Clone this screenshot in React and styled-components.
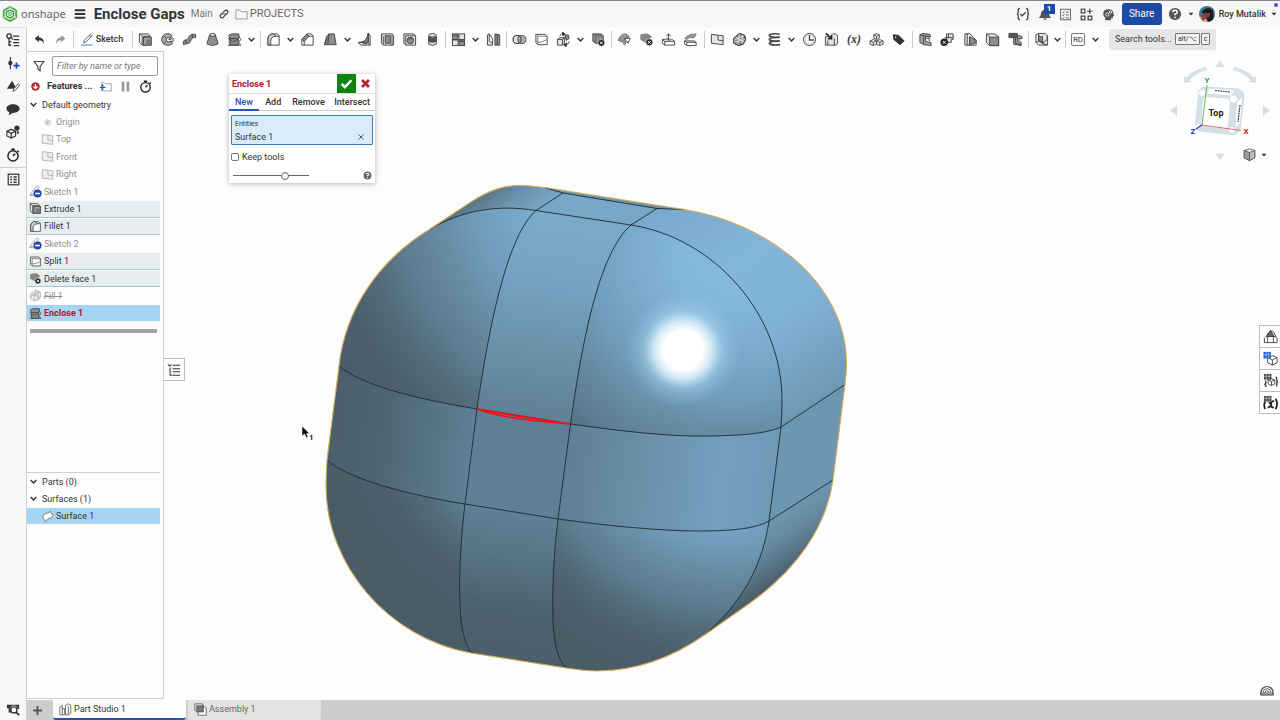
import React from 'react';
import styled, { createGlobalStyle, css } from 'styled-components';

const GlobalStyle = createGlobalStyle`
    * {
        box-sizing: border-box;
    }
    body {
        margin: 0;
        background: #fdfdfd;
        color: #333;
        font-family: Roboto, "Liberation Sans", sans-serif;
        font-size: 9px;
        line-height: 12px;
    }
    button, input {
        font: inherit;
        color: inherit;
    }
    button {
        padding: 0;
        border: 0;
        background: none;
        cursor: pointer;
    }
`;

/* ---------- icons, all on a 16 x 16 grid ---------- */

const dark = '#444';
const mid = '#8c8c8c';
const pale = '#e4e4e4';

const icons = {
    undo: <path d="M1 6.500 L7 1.500 V5 C12.500 5 15 8.500 14 14.500 C13 10.500 11 9 7 9 V12 Z" fill="#333" stroke="none" />,
    redo: <path d="M15 6.500 L9 1.500 V5 C3.500 5 1 8.500 2 14.500 C3 10.500 5 9 9 9 V12 Z" fill="#999" stroke="none" />,
    pencil: <g><path d="M3 12 L4 9 L11.500 1.500 L13.500 3.500 L6 11 Z M10 3 L12 5" /><path d="M0 14.800 H14" stroke="#2d5db5" /></g>,
    chevron: <path d="M3 5.500 L8 10.500 L13 5.500" strokeWidth="2.600" stroke="#333" />,
    caret: <path d="M3 5.500 H13 L8 11 Z" fill="#333" stroke="none" />,
    extrude: <g><path d="M1.500 2 H11 L12.500 3.500 V5.500 M1.500 2 V11 L4.500 14 H14 V5.500 H6 V14" fill={pale} /><path d="M6 5.500 H14 V14 H6 Z" fill="#a5a5a5" /><path d="M8.500 8 H14 V14 H8.500 Z" fill="#777" stroke="none" /><path d="M1.500 2 L4.500 4.500 V14 M4.500 4.500 H12.500" /></g>,
    revolve: <g><path d="M13 4 Q10 1 7 1.800 Q2 3 1.800 8 Q2 13 7 14.200 Q10.500 14.800 13.500 12 L11 9.800 Q9 11.200 7.500 10.200 Q6 8.500 7 6.800 Q8.500 5 10.500 6.500 Z" fill="#aaa" /><path d="M10 6.500 H14 V10 H11 M9 8 H12 M4 4 L6.500 6.500 M4 12.500 L6.500 10" /></g>,
    sweep: <path d="M1.500 10 C2.500 7.500 5.500 9.500 6.500 7 C7.500 3 11 2 14.500 2.500 V6 C11 5.500 10 7 9 10 C7.500 13.500 4.500 12 1.500 13.500 Z M11 2.700 V6 M4 9 L4.500 12.500" fill={mid} />,
    loft: <g><path d="M5 3 L11 3 L14 12.500 Q8 16 2 12.500 Z" fill={mid} /><ellipse cx="8" cy="3" rx="3" ry="1.500" fill={pale} /></g>,
    enclose: <g><path d="M2 3.500 L5 2 H12.500 L13 5 L11 7 H3 Z" fill={mid} /><path d="M3 7 H12 V14 H3 Z" fill={mid} /><path d="M1 6.500 L6 10.500 L12.500 7.500 M1 14 H15 M12.500 5 L15 8 L12 10.500 L14.500 13.500 M1.500 10 L4 12" /></g>,
    fillet: <g><path d="M2 14 V8 Q2 2 8 2 H12 L14 4 V14 H5 Z" fill="#fff" /><path d="M2 13.500 V8 Q2 2 8 2 L11 4.500 Q5 5 5 10 V14 Z" fill="#c9c9c9" /><path d="M11 4.500 H14" /></g>,
    chamfer: <g><path d="M2 14 V8 L7.500 2 H12 L14 4.500 V14 Z" fill="#fff" /><path d="M2 8 L7.500 2 L9.500 4.500 L4.500 10 Z" fill={mid} /><path d="M4.500 10 V14 M9.500 4.500 H14" /></g>,
    draft: <g><path d="M6.500 2 L12 2 L14 13.500 H1.500 Z" fill={mid} /><path d="M6.500 2 L4 4 L1.500 13.500 M6.500 2 L5 13.500" /></g>,
    rib: <g><path d="M12 1.500 L14 3.500 V14 H4 L1.500 11.500 L6 10.500 Q11 9 12 1.500 Z" fill={pale} /><path d="M12 1.500 V11 L9 13 L5 11 Q11 9 12 1.500 Z" fill={mid} /><path d="M12 1.500 V11 H1.500 M12 11 L14 14" /></g>,
    shell: <g><path d="M1.500 2 H13 L14.500 4 V14 H4 L1.500 12 Z" fill={pale} /><path d="M5.500 4 H11 V12 H5.500 Z" fill={mid} /><path d="M3.500 4 V14 M12.800 3 V14" /></g>,
    hole: <g><path d="M2 2 H12.500 L14.500 4 V14 H4 L2 12 Z" fill={pale} /><circle cx="9" cy="9" r="3.500" fill={mid} /><path d="M4 4 V14 M4 4 H14" /><path d="M7 8 Q9 5.500 11 8" /></g>,
    cylinder: <g><path d="M4 3.500 V13 Q8 15.500 12 13 V3.500" fill={pale} /><ellipse cx="8" cy="3.500" rx="4" ry="1.800" fill={pale} /><path d="M4 5.500 Q8 7.500 12 5.500 V10 Q8 12 4 10 Z" fill="#555" /></g>,
    pattern: <g><rect x="1.500" y="2" width="6" height="6" fill={mid} /><rect x="8.500" y="2" width="6" height="6" fill={pale} /><rect x="1.500" y="8.500" width="6" height="6" fill={pale} /><rect x="8.500" y="8.500" width="6" height="6" fill={mid} /><path d="M3 4 H7.500 M8.500 10 H14" /></g>,
    mirror: <g><path d="M1.500 3 L3.500 2 V10 L7 12 V14 H1.500 Z" fill={pale} /><path d="M14.500 3 L9.500 2 V14 H14.500 Z" fill={mid} /><path d="M3.500 2 L7 7 V12 M12 3 V14" /></g>,
    boolean: <g><circle cx="5.500" cy="8" r="4.300" fill={pale} /><circle cx="10.500" cy="8" r="4.300" fill={mid} fillOpacity=".7" /><circle cx="5.500" cy="8" r="4.300" /></g>,
    split: <g><path d="M2 2.500 H12 L14 4.500 V13.500 H4 L2 11.500 Z" fill="#fff" /><path d="M2 2.500 L4 4.500 H14 M4 4.500 V13.500 M2 9.500 L4 11 Q8 11.500 14 8" stroke="#777" /></g>,
    transform: <g><path d="M1.500 8 L4 6 H9 V12 L7 14 H1.500 Z" fill={pale} /><path d="M9.500 4 L13 3 L14 7 L11 9 Z" fill={mid} /><path d="M1.500 8 H7 V14 M7 8 L9 6 M4 4 Q5 1 9 2 M14 10 Q14 13 10 14" /><path d="M7 0 L10 2.500 L7 4 Z M11 11.500 V15.500 L8.500 14 Z" fill="#333" /></g>,
    deletePart: <g><path d="M2 2 H11 L13 4 V12 H5 L2 10 Z" fill={mid} /><path d="M2 2 L5 4 V12 M5 4 H13" stroke="#666" /><circle cx="11" cy="11.500" r="3.700" fill="#222" stroke="#fff" strokeWidth=".6" /><path d="M9.500 10 L12.500 13 M12.500 10 L9.500 13" stroke="#fff" /></g>,
    moveFace: <g stroke="#666"><path d="M1.500 9 Q3 2 10 2 L13 5 Q8 6 7 11 Z" fill="#999" /><path d="M8 7 L14 6.500 L12 12 L10.500 10 L8 14 L7 12.500 L9.500 9 Z" fill="#fff" stroke={dark} /></g>,
    deleteFace: <g><path d="M2 3 L9 2 L13 5 L7 11 L2 8 Z" fill={mid} stroke="#777" /><path d="M2 8 L7 5 L13 5" stroke="#777" /><circle cx="11" cy="11" r="3.700" fill="#222" stroke="#fff" strokeWidth=".6" /><path d="M9.500 9.500 L12.500 12.500 M12.500 9.500 L9.500 12.500" stroke="#fff" /></g>,
    thicken: <g><path d="M1.500 8 H12 L14.500 10 V14 H4 L1.500 12 Z" fill="#fff" /><path d="M1.500 8 L4 10 H14.500 M4 10 V14" /><path d="M3 8 L7 6 L13 8 L9 9.500 Z" fill={mid} stroke="none" /><path d="M8 8.500 V2 M5.500 4.500 L8 2 L10.500 4.500" /></g>,
    offset: <g><path d="M2 7 Q5 2 14 2 L12 6 Q6 5 4 8 Z" fill="#999" stroke="#777" /><path d="M1.500 9.500 H12 L14 11 V14.500 H4 L1.500 12.500 Z" fill="#fff" /><path d="M1.500 9.500 L4 11 H14 M4 11 V14" /></g>,
    plane: <g><path d="M1.500 2.500 L14 4 V13.500 L1.500 12 Z" fill={pale} /><path d="M8.500 3.500 V8.500 L14 9.500" /></g>,
    ball: <g><path d="M8 1.500 L13.500 3.500 L14.500 8 L12 13 L7 14.500 L2 12 L1.500 7 Z" fill={mid} /><path d="M3 5 L14 11 M8 2 L6 14 M2 9 L13 4 M11 3 L11 13 M2 11 L14 8" stroke="#eee" strokeWidth=".8" /><path d="M8 1.500 L13.500 3.500 L14.500 8 L12 13 L7 14.500 L2 12 L1.500 7 Z" /></g>,
    helix: <g strokeWidth="1.700"><path d="M13.500 2.500 C7 1 2 2.500 2.500 4 S10 6 13.500 5.500 C8 5.500 2 6 2.500 8 S10 10 13.500 9.500 C8 9.500 2 10 2.500 12 S10 14 14 13.500" /></g>,
    clock: <g><circle cx="8" cy="8" r="6.500" fill="#fff" /><circle cx="8" cy="8" r="5" stroke="#999" strokeWidth=".7" /><path d="M8 3.500 V8.500 H12.500" strokeWidth="1.500" /></g>,
    derived: <g><path d="M4 5 H1.500 V14 H13 L14.500 12 V4 L12 2 H9 M4 14 V9 M11 7 V14" fill={pale} /><path d="M2 1.500 L8 7 M8 3 V7.200 H4" stroke="#222" strokeWidth="1.800" /></g>,
    cubes: <g fill={pale} strokeWidth=".9"><path d="M8 1.500 L11 3 V6.500 L8 8 L5 6.500 V3 Z M5 3 L8 4.500 L11 3 M8 4.500 V8" /><path d="M4.500 8 L8 9.500 V13 L4.500 14.500 L1 13 V9.500 Z M1 9.500 L4.500 11 L8 9.500 M4.500 11 V14.500" /><path d="M11.500 8 L15 9.500 V13 L11.500 14.500 L8 13 V9.500 Z M8 9.500 L11.500 11 L15 9.500 M11.500 11 V14.500" /></g>,
    tag: <g><path d="M2.500 3 L8 3.500 L14 9.500 L9.500 13.500 L3 8 Z" fill="#333" stroke="#333" strokeLinejoin="round" /><circle cx="5" cy="5.500" r=".8" fill="#fff" stroke="none" /></g>,
    sheetC: <g><path d="M2 3 L5 1.500 L13 2.500 V5.500 L8 5 V10 L14 11.500 V14.500 L6 13.500 L2 11 Z" fill="#a5a5a5" /><path d="M2 3 L6 4 L13 5 M6 4 V13 M9 7 H12 V10" /></g>,
    bendX: <g><path d="M7 2 H14 V8 H12 V11 H7 Z" fill={pale} /><path d="M9 2 V6 H14 M5 6 H11" /><circle cx="4.500" cy="11" r="4" fill="#222" stroke="none" /><path d="M3 9.500 L6 12.500 M6 9.500 L3 12.500" stroke="#fff" /></g>,
    flange: <g><path d="M2 2 L7 1.500 L14 9 V14 H2 Z" fill={pale} /><path d="M7 5 L14 9 V11 L7 14 Z" fill={mid} /><path d="M4.500 2 V14" /></g>,
    box: <g><path d="M1.500 2 H10 L14.500 5 V14.500 H5 L1.500 11 Z" fill={pale} /><rect x="5" y="5.500" width="9.500" height="9" fill={mid} /><path d="M1.500 2 L5 5.500" /></g>,
    tabJoint: <g><path d="M6 4 H13 L15 5 V7 H10 V10 L14 11 V14.500 L6 13 Z" fill="#a5a5a5" /><path d="M1 1.500 H10 V6 H1 Z" fill="#555" /><path d="M8 6 V12 L14 13.500 M10 8.500 H13" /></g>,
    frame: <g><path d="M2 3 L5 1.500 H12 L14.500 4 V14 H5 L2 11 Z" fill={pale} /><path d="M5 1.500 V10 L2 11 M5 10 L14 14 M9 4 V12 L14 8 V4" /><path d="M5 4 L9 6 V11 L5 9 Z" fill={mid} /></g>,
    list: <g><rect x="2" y="1.500" width="12" height="13" /><path d="M4 5 L5 6 L6.500 4 M4 8.500 L5 9.500 L6.500 7.500 M4 12 L5 13 L6.500 11 M8.500 5 H12 M8.500 8.500 H12 M8.500 12 H12" /></g>,
    braces: <g strokeWidth="1.500"><path d="M4.500 1.500 Q2.500 1.500 2.500 4 V6 Q2.500 8 1 8 Q2.500 8 2.500 10 V12 Q2.500 14.500 4.500 14.500 M11.500 1.500 Q13.500 1.500 13.500 4 V6 Q13.500 8 15 8 Q13.500 8 13.500 10 V12 Q13.500 14.500 11.500 14.500 M5 8 L7 10 L11 6" /></g>,
    bell: <path d="M1 12.500 Q3 11 3.500 7 Q4 3 8 3 Q12 3 12.500 7 Q13 11 15 12.500 Z M6 13 Q8 16.500 10 13 Z" fill="#555" stroke="none" />,
    apps: <g strokeWidth="1.500"><rect x="1.500" y="1.500" width="4.500" height="4.500" /><rect x="1.500" y="10" width="4.500" height="4.500" /><rect x="10" y="10" width="4.500" height="4.500" /><path d="M12 .5 V7.500 M8.500 4 H15.500" /></g>,
    head: <g><path d="M4 15 V12 Q1.500 10 1.500 7 Q1.500 1.500 8 1.500 Q14 1.500 14 7 L15 9.500 L13.500 10 V12.500 H11 V15 Z" fill="#555" stroke="none" /><circle cx="6.500" cy="8" r="2" stroke="#fff" /><circle cx="10.500" cy="5" r="1.500" stroke="#fff" /></g>,
    help: <g><circle cx="8" cy="8" r="7" fill="#555" stroke="none" /><path d="M5.500 6 Q5.500 3.800 8 3.800 Q10.500 3.800 10.500 6 Q10.500 7.500 8 8.200 V9.500 M8 11 V12.800" stroke="#fff" strokeWidth="1.800" /></g>,
    link: <g strokeWidth="1.800" stroke="#333"><path d="M7 9 Q5 7 7 5 L9.500 2.500 Q11.500 1 13.300 2.700 Q15 4.500 13.500 6.500 L11 9" /><path d="M9 7 Q11 9 9 11 L6.500 13.500 Q4.500 15 2.700 13.300 Q1 11.500 2.500 9.500 L5 7" /></g>,
    folder: <path d="M1 13.500 V2.500 H6 L7.500 4.500 H15 V13.500 Z" stroke="#888" />,
    menu: <path d="M1 3 H15 M1 8 H15 M1 13 H15" stroke="#333" strokeWidth="2.400" />,
    featureTree: <g strokeWidth="1.500" stroke="#333"><circle cx="3.500" cy="3.500" r="2.500" /><path d="M3.500 6 V14 H6 M3.500 10 H6 M8 3.500 H15 M9 7.500 H15 M8 11 H15 M9 14.500 H15 M6 5 L8 7.500" /></g>,
    insert: <g><path d="M5 1 V15" stroke="#333" strokeWidth="1.300" /><circle cx="5" cy="8" r="2.500" fill="#333" stroke="none" /><path d="M12 7.500 V14.500 M8.500 11 H15.500" stroke="#2149a8" strokeWidth="2" /></g>,
    sketchEdit: <g><path d="M7 2 L12 11 H1 Z" fill="#333" stroke="none" /><path d="M8 14 L9 11 L14 5.500 L15.500 7 L10.500 13 Z" fill="#fff" /></g>,
    comment: <path d="M8 2.500 C12 2.500 15.500 4.500 15.500 7.500 S12 12.500 8 12.500 L3 15 L4 11.800 C2 11 .5 9.500 .5 7.500 C.5 4.500 4 2.500 8 2.500 Z" fill="#333" stroke="none" />,
    cubeHelp: <g stroke="#333"><path d="M6 5 L11 7 V12.500 L6 15 L1 12.500 V7 Z M1 7 L6 9.500 L11 7 M6 9.500 V15" strokeWidth="1.300" /><circle cx="12.500" cy="3.500" r="3" fill="#333" stroke="none" /><path d="M13.500 7 V10" strokeWidth="2" /></g>,
    stopwatch: <g stroke="#222" strokeWidth="1.700"><circle cx="8" cy="9" r="5.800" /><path d="M6 1.500 H10 M8 9 L10.500 6.500 M13 3 L14.500 4.500" /></g>,
    table: <g stroke="#333"><rect x="1.500" y="1.500" width="13" height="13" strokeWidth="1.500" /><path d="M4 5 H6 M4 8 H6 M4 11.500 H6 M8 5 H12 M8 8 H12 M8 11.500 H12" strokeWidth="1.800" /></g>,
    searchModel: <g><path d="M1 3 H15 V8 H13 A4 4 0 0 0 5 8 L6 12 H3 V7 H1 Z" fill="#333" stroke="none" /><circle cx="9" cy="9" r="3.500" fill="#fff" stroke="#333" strokeWidth="1.500" /><path d="M11.500 11.500 L15 15" stroke="#333" strokeWidth="2.200" /></g>,
    funnel: <path d="M1.500 2 H14.500 L9.500 8.500 V14.500 L6.500 12 V8.500 Z" strokeWidth="1.500" />,
    errorDown: <g><circle cx="8" cy="8" r="7.500" fill="#b3262e" stroke="none" /><path d="M8 3.500 V11 M4.500 8 L8 11.500 L11.500 8" stroke="#fff" strokeWidth="2.400" /></g>,
    addFolder: <g><path d="M3 13.500 V3 H7 L8 4.500 H15 V13.500 Z" stroke="#999" /><path d="M4.500 5 V12.500 M1 9 H8" stroke="#2d5db5" strokeWidth="1.600" /></g>,
    pause: <path d="M5 2 V14 M11 2 V14" stroke="#999" strokeWidth="3.200" />,
    origin: <g stroke="#aaa"><circle cx="8" cy="8" r="3.300" /><circle cx="8" cy="8" r="1" fill="#888" /></g>,
    planeGray: <g stroke="#aaa"><path d="M1.500 2 L14.500 3.500 V14 L1.500 12.500 Z" fill="#eee" /><path d="M8.500 3 V8.500 L14.500 9.500" /></g>,
    sketchHidden: <g><path d="M1 13 L3 9 L10 1 L12.500 3 L5 11 Z M1 13 H6" stroke="#999" /><circle cx="10.500" cy="10.500" r="5" fill="#1c4aa5" stroke="none" /><path d="M7.500 10.500 H13.500" stroke="#fff" strokeWidth="2" /></g>,
    fill: <g stroke="#aaa"><path d="M8 1.500 L13.500 3.500 L14.500 8 L12 13 L7 14.500 L2 12 L1.500 7 Z" fill="#eee" /><path d="M3 5 L14 11 M8 2 L6 14 M2 9 L13 4 M11 3 V13" /></g>,
    surface: <path d="M2 8.500 Q3 7.500 4.500 4.500 L9.500 3.500 L11 1.500 L14.500 6.500 L12.500 10 L8 11 L5.500 14.500 Z" fill="#fff" stroke="#666" strokeLinejoin="round" />,
    plus: <path d="M8 1.500 V14.500 M1.500 8 H14.500" stroke="#555" strokeWidth="2.600" />,
    partStudio: <g stroke="#555"><path d="M1 5 L4 3 V14.500 H1 Z M4 7 H7 V14.500 H4" /><path d="M8 3 L11 1 L14.500 2.500 V12.500 L11.500 14.500 H8 Z M11.500 4 V14" fill="#fff" /></g>,
    assembly: <g stroke="#555"><path d="M5 4 H12 L15 6.500 V15 H5 Z" fill="#fff" /><path d="M1 1 H10 L11.500 3 V11 H3 L1 9 Z" fill={pale} /><rect x="3.500" y="3.500" width="7.500" height="7" fill="#777" /></g>,
    check: <path d="M2 8.500 L6 12.500 L14 4" stroke="#fff" strokeWidth="3" />,
    cross: <path d="M3 3 L13 13 M13 3 L3 13" stroke="#b3262e" strokeWidth="4" />,
    remove: <path d="M3 3 L13 13 M13 3 L3 13" stroke="#555" strokeWidth="2" />,
    treeToggle: <g stroke="#333" strokeWidth="1.200"><path d="M1 1.500 L3 3.500 L5 1.500 M6.500 2.500 H15 M6.500 6.500 H15 M6.500 10 H15 M6.500 14 H15 M3.500 5 V14 H6" /></g>,
    material: <g><path d="M1.500 10 L3.500 8 H13 L15 10 V14.500 H1.500 Z M5 8 V14 M11 8 V14" fill="#fff" /><path d="M8 1.500 L12 8 H3.500 Z" fill="#666" /><path d="M4 7 Q8 -1 12 4 L14 9" /></g>,
    tableCube: <g><path d="M10 5 L15 7 V12.500 L10 15 L5 12.500 V7 Z M5 7 L10 9.500 L15 7 M10 9.500 V15" fill="#fff" /><rect x=".5" y="1" width="8" height="7" fill="#2d66c8" stroke="none" /><path d="M.5 4 H8.500 M3.500 1 V8 M6 1 V8" stroke="#9fc0ee" strokeWidth=".7" /></g>,
    tableConfig: <g><path d="M9 6 L12.500 7.500 V11.500 L9 13.500 L5.500 11.500 V7.500 Z M5.500 7.500 L9 9 L12.500 7.500 M9 9 V13.500" /><path d="M3 8 V11 L2 12 L3 13 V15 M13.500 4 Q15 5 14.500 8 L15.500 9.500 L14.500 11 V14.500" strokeWidth="1.500" /><rect x="1" y="1" width="8" height="6" fill="#444" stroke="none" /><path d="M1 3.500 H9 M3.500 1 V7 M6.500 1 V7" stroke="#ccc" strokeWidth=".7" /></g>,
    tableVar: <g><path d="M2.500 7 Q0 11 2.500 15 M13.500 4 Q16.500 9 13.500 15 M5 13.500 Q8 13 8.500 10 Q9 6 12 6.500 M6 8 Q8.500 8 9 12 Q9.500 14 11.500 13" strokeWidth="1.900" stroke="#222" /><rect x="1" y="1" width="8" height="6" fill="#444" stroke="none" /><path d="M1 3.500 H9 M3.500 1 V7 M6.500 1 V7" stroke="#ccc" strokeWidth=".7" /></g>,
    shaded: <g stroke="#555"><path d="M8 1 L14.500 3 V12 L8 15.500 L1.500 12 V3 Z" fill="#eee" /><path d="M8 5.500 L14.500 3 V12 L8 15.500 Z" fill="#bbb" /><path d="M1.500 3 L8 5.500 V15.500 L1.500 12 Z" fill="#999" /></g>,
    protractor: <g stroke="#444"><path d="M1 13.500 V11 A7 7 0 0 1 15 11 V13.500 Z" fill="#fff" strokeWidth="1.400" /><path d="M3.500 11 A4.500 4.500 0 0 1 12.500 11 M5.500 11.500 A2.500 2.500 0 0 1 10.500 11.500 M1 11.500 H15" /></g>,
    logo: <g strokeWidth="2"><path d="M8 1 L14.200 4.500 V11.500 L8 15 L1.800 11.500 V4.500 Z" stroke="#4eae48" /><path d="M8 4 L11.500 6 V10 L8 12 L4.500 10 V6 Z" stroke="#2f8f3f" strokeWidth="1.400" /><circle cx="8" cy="8" r="1.500" stroke="#4eae48" strokeWidth="1" /><path d="M1.800 11.500 L4.500 10 M8 1 V4 M14.200 11.500 L11.500 10" stroke="#f7f7f7" strokeWidth="1" /></g>,
};

const IconSvg = styled.svg`
    display: block;
    flex: none;
    width: ${(p) => p.$size}px;
    height: ${(p) => p.$size}px;
    fill: none;
    stroke: ${dark};
    stroke-width: 1px;
`;

function Icon({ name, size = 14 }) {
    return (
        <IconSvg $size={size} viewBox="0 0 16 16" aria-hidden="true">
            {icons[name]}
        </IconSvg>
    );
}

/* ---------- header ---------- */

const Page = styled.div`
    display: flex;
    flex-direction: column;
    min-height: 100vh;
`;

const Header = styled.header`
    display: flex;
    align-items: center;
    flex: none;
    height: 27px;
    padding: 0 2px;
    background: #f7f7f7;
    border-top: 1px solid #8c878b;
`;

const Brand = styled.a`
    display: flex;
    align-items: center;
    gap: 3px;
    color: #666;
    font-family: "Noto Sans", sans-serif;
    font-size: 11px;
    text-decoration: none;
`;

const IconButton = styled.button`
    display: flex;
    align-items: center;
    justify-content: center;
    flex: none;
    width: ${(p) => p.$w || 22}px;
    height: 20px;
    position: relative;
`;

const Title = styled.h1`
    margin: 0 6px 0 0;
    font-size: 15px;
    line-height: 20px;
    font-weight: 700;
`;

const Branch = styled.span`
    color: #777;
    font-size: 10px;
`;

const Crumb = styled.a`
    display: flex;
    align-items: center;
    gap: 2px;
    color: #666;
    font-size: 11px;
    text-decoration: none;
`;

const HeaderRight = styled.div`
    display: flex;
    align-items: center;
    margin-left: auto;
`;

const Badge = styled.span`
    position: absolute;
    top: 0;
    right: 1px;
    width: 11px;
    height: 10px;
    background: #1c4aa5;
    color: #fff;
    font-size: 8px;
    line-height: 10px;
    font-weight: 700;
`;

const ShareButton = styled.button`
    width: 40px;
    height: 22px;
    margin: 0 2px;
    border-radius: 3px;
    background: #1c4aa5;
    color: #fff;
    font-size: 10px;
`;

const UserButton = styled.button`
    display: flex;
    align-items: center;
    gap: 4px;
    padding-left: 3px;
    font-weight: 500;
`;

const StatusDot = styled.span`
    position: absolute;
    top: 3px;
    right: 2px;
    width: 4px;
    height: 4px;
    border-radius: 50%;
    background: #5b46d6;
`;

function Avatar() {
    return (
        <svg width="16" height="16" viewBox="0 0 16 16" aria-hidden="true">
            <defs>
                <clipPath id="avatar">
                    <circle cx="8" cy="8" r="8" />
                </clipPath>
            </defs>
            <g clipPath="url(#avatar)">
                <rect width="16" height="16" fill="#3f7096" />
                <path d="M0 16 V11 L5 10 L12 12 V16 Z" fill="#c9b5ae" />
                <path d="M2 9 L5 8 L7 13 L3 15 Z" fill="#a43b2e" />
                <path d="M3 6 Q8 -1 14 4 L15 16 H9 L6 10 Z" fill="#221d1e" />
                <path d="M5 6 H11 V10 L8 12 L5 10 Z" fill="#6e4537" />
                <path d="M3 5 L12 4 V7 H4 Z" fill="#15181d" />
            </g>
        </svg>
    );
}

/* ---------- body, rail and toolbar ---------- */

const Body = styled.div`
    display: flex;
    flex: 1;
`;

const Rail = styled.nav`
    display: flex;
    flex-direction: column;
    flex: none;
    width: 27px;
    background: #f7f7f7;
    border-top: 1px solid #e2e2e2;
    border-right: 1px solid #cfcfcf;
`;

const RailButton = styled.button`
    display: flex;
    align-items: center;
    justify-content: center;
    height: 23px;
    margin-top: ${(p) => (p.$bottom ? 'auto' : 0)};
`;

const RailLine = styled.hr`
    width: 100%;
    margin: 1px 0 0;
    border: 0;
    border-top: 1px solid #cfcfcf;
`;

const Main = styled.div`
    display: flex;
    flex-direction: column;
    flex: 1;
    min-width: 0;
`;

const Toolbar = styled.div`
    display: flex;
    align-items: center;
    flex: none;
    height: 24px;
`;

const ToolGroup = styled.div`
    display: flex;
    align-items: center;
    justify-content: space-between;
    flex: 0 0 ${(p) => p.$w}px;
    height: 17px;
    padding: 0 3px 0 2px;
    border-left: ${(p) => (p.$first ? '0' : '1px solid #ccc')};
`;

const ToolButton = styled.button`
    display: flex;
    align-items: center;
    justify-content: center;
    gap: 2px;
    flex: none;
    width: ${(p) => p.$w || 20}px;
    font-size: ${(p) => (p.$italic ? 12 : 9)}px;
    font-weight: 500;
    ${(p) => p.$italic && css`
        font-family: "Liberation Serif", serif;
        font-style: italic;
        font-weight: 700;
    `}
`;

const Tag = styled.span`
    padding: 0 1px;
    border: 1px solid #777;
    border-radius: 2px;
    font-size: 8px;
    line-height: 11px;
    font-weight: 400;
`;

const SearchTools = styled.button`
    display: flex;
    align-items: center;
    gap: 3px;
    height: 21px;
    margin-left: 6px;
    padding: 0 6px;
    border-radius: 2px;
    background: #e6e6e6;
    white-space: nowrap;
`;

const Keys = styled.span`
    display: flex;
    gap: 1px;
`;

const Key = styled.kbd`
    padding: 0 2px;
    border: 1px solid #777;
    border-radius: 1px;
    background: #f2f2f2;
    font-family: Roboto, "DejaVu Sans", sans-serif;
    font-size: 7px;
    line-height: 10px;
`;

const toolGroups = [
    { w: 128, tools: ['extrude', 'revolve', 'sweep', 'loft', 'enclose', 'chevron'] },
    { w: 185, tools: ['fillet', 'chevron', 'chamfer', 'draft', 'chevron', 'rib', 'shell', 'hole', 'cylinder'] },
    { w: 61, tools: ['pattern', 'chevron', 'mirror'] },
    { w: 105, tools: ['boolean', 'split', 'transform', 'chevron', 'deletePart'] },
    { w: 93, tools: ['moveFace', 'deleteFace', 'thicken', 'offset'] },
    { w: 208, tools: ['plane', 'ball', 'chevron', 'helix', 'chevron', 'clock', 'derived', 'variable', 'cubes', 'tag'] },
    { w: 116, tools: ['sheetC', 'bendX', 'flange', 'box', 'tabJoint'] },
    { w: 37, tools: ['frame', 'chevron'] },
    { w: 38, tools: ['custom', 'chevron'] },
];

function Tool({ name }) {
    if (name === 'chevron') {
        return <ToolButton $w={10} aria-label="More"><Icon name="chevron" size={9} /></ToolButton>;
    }
    if (name === 'variable') {
        return <ToolButton $italic>(x)</ToolButton>;
    }
    if (name === 'custom') {
        return <ToolButton><Tag>RD</Tag></ToolButton>;
    }
    return <ToolButton aria-label={name}><Icon name={name} size={15} /></ToolButton>;
}

/* ---------- feature list ---------- */

const Workspace = styled.div`
    display: flex;
    flex: 1;
    position: relative;
`;

const Panel = styled.aside`
    display: flex;
    flex-direction: column;
    flex: none;
    width: 137px;
    margin-bottom: 1px;
    border: solid #cfcfcf;
    border-width: 1px 1px 1px 0;
`;

const FilterRow = styled.label`
    display: flex;
    align-items: center;
    gap: 7px;
    padding: 4px 5px 0 6px;
`;

const FilterInput = styled.input`
    flex: 1;
    min-width: 0;
    height: 20px;
    padding: 0 4px;
    border: 1px solid #999;
    border-radius: 2px;
    background: #fff;
    &::placeholder {
        color: #777;
        font-style: italic;
        opacity: 1;
    }
`;

const FeaturesHead = styled.div`
    display: flex;
    align-items: center;
    gap: 7px;
    height: 20px;
    padding-left: 4px;
`;

const Tree = styled.div`
    display: grid;
    grid-auto-rows: 1fr;
    height: ${(p) => p.$h}px;
    margin-right: 3px;
`;

const Row = styled.button`
    display: flex;
    align-items: center;
    gap: ${(p) => (p.$head ? 4 : 2)}px;
    width: 100%;
    padding: 1px 0 0 ${(p) => (p.$level === 1 ? 14 : 2)}px;
    border-bottom: 1px solid transparent;
    background-clip: padding-box;
    text-align: left;
    color: ${(p) => (p.$muted ? '#8f8f8f' : '#333')};
    ${(p) => p.$shaded && css`
        background-color: #e7edef;
        border-bottom-color: #9cc8e0;
        box-shadow: inset 0 1px #fdfdfd;
    `}
    ${(p) => p.$active && css`
        background-color: #a5d5f2;
    `}
    ${(p) => p.$error && css`
        color: #a3202a;
        font-weight: 700;
    `}
    ${(p) => p.$struck && css`
        font-style: italic;
        text-decoration: line-through;
    `}
`;

const RollbackBar = styled.hr`
    flex: none;
    width: 127px;
    height: 4px;
    margin: 7px 3px 0;
    border: 0;
    background: #a2a2a2;
`;

const PartsSection = styled.div`
    height: 226px;
    margin-top: auto;
    margin-right: 3px;
    border-top: 1px solid #cfcfcf;
    & > div {
        margin-right: 0;
    }
`;

const features = [
    { icon: 'origin', label: 'Origin', level: 1, muted: true },
    { icon: 'planeGray', label: 'Top', level: 1, muted: true },
    { icon: 'planeGray', label: 'Front', level: 1, muted: true },
    { icon: 'planeGray', label: 'Right', level: 1, muted: true },
    { icon: 'sketchHidden', label: 'Sketch 1', muted: true },
    { icon: 'extrude', label: 'Extrude 1', shaded: true },
    { icon: 'fillet', label: 'Fillet 1', shaded: true },
    { icon: 'sketchHidden', label: 'Sketch 2', muted: true },
    { icon: 'split', label: 'Split 1', shaded: true },
    { icon: 'deleteFace', label: 'Delete face 1', shaded: true },
    { icon: 'fill', label: 'Fill 1', muted: true, struck: true },
    { icon: 'enclose', label: 'Enclose 1', active: true, error: true },
];

function FeaturePanel() {
    return (
        <Panel>
            <FilterRow>
                <Icon name="funnel" size={12} />
                <FilterInput type="text" placeholder="Filter by name or type" aria-label="Filter by name or type" />
            </FilterRow>
            <FeaturesHead>
                <Icon name="errorDown" size={9} />
                <strong>Features ...</strong>
                <Icon name="addFolder" size={13} />
                <Icon name="pause" size={13} />
                <Icon name="stopwatch" size={13} />
            </FeaturesHead>
            <Tree $h={226}>
                <Row $head><Icon name="chevron" size={9} />Default geometry</Row>
                {features.map((f) => (
                    <Row
                        key={f.label}
                        $level={f.level}
                        $muted={f.muted}
                        $shaded={f.shaded}
                        $active={f.active}
                        $error={f.error}
                        $struck={f.struck}
                    >
                        <Icon name={f.icon} size={13} />
                        {f.label}
                    </Row>
                ))}
            </Tree>
            <RollbackBar />
            <PartsSection>
                <Tree $h={52}>
                    <Row $head><Icon name="chevron" size={9} />Parts (0)</Row>
                    <Row $head><Icon name="chevron" size={9} />Surfaces (1)</Row>
                    <Row $level={1} $active><Icon name="surface" size={13} />Surface 1</Row>
                </Tree>
            </PartsSection>
        </Panel>
    );
}

/* ---------- model ---------- */

const Viewport = styled.main`
    flex: 1;
    min-width: 0;
    position: relative;
`;

const ModelSvg = styled.svg`
    display: block;
    width: 100%;
    height: 100%;
`;

const outline = 'M339 366 C345 312 376 262 430 229 L471 202 C488 191 502 185.500 520 185.500 C530 185.500 540 187 548 188 L684 209.500 C770 223 846 285 846.500 362 C846.500 370 846 377 845 384 L833 480 C826 528 796 570 750 603 L706 634 C672 658 635 671 597 671 C586 671 576 669.500 566 668 L471 653 C388 638 326 565 326 486 C326 477 326.500 468 327 460 Z';

// the four corner spheres share one set of stops, centred towards the light
const spheres = [
    { id: 'tl', cx: 640, cy: 185, r: 355, d: 'M536 210.500 C508 235 490 320 477 409 C410 398 360 384 339 366 C345 312 376 262 430 229 C462 211 495 204 536 210.500 Z' },
    { id: 'tr', cx: 735, cy: 250, r: 320, d: 'M631 225 C715 238 782 315 782 400 C782 409 781.500 418 781 427 C768 433 745 435.500 710 436 C670 437 620 431 570.500 424 C583 335 600 252 631 225 Z' },
    { id: 'bl', cx: 610, cy: 371, r: 287, d: 'M327 460 C348 478 398 493 465 504 C460 545 459 580 460 605 C461 630 465 645 471.500 653 C388 638 326 565 326 486 Z' },
    { id: 'br', cx: 725, cy: 415, r: 275, d: 'M558 519 C610 526 660 531 700 531 C735 531 757 528 769 521 C762 567 742 602 706 634 C672 658 635 671 597 671 C586 671 576 669.500 566 668 C558 660 554 645 553 620 C552 585 554 552 558 519 Z' },
];

const sphereStops = [
    [0, '#87badf'], [0.18, '#84b6dc'], [0.34, '#79a9ca'], [0.48, '#6f9ab8'], [0.58, '#668ba3'],
    [0.68, '#5e7e92'], [0.78, '#536c7a'], [0.88, '#4b606c'], [1, '#495d69'],
];

const strips = [
    {
        id: 'topMid', v: [535, 211, 503, 413],
        stops: [[0, '#7aaaca'], [0.3, '#75a4c3'], [0.65, '#6b92ab'], [1, '#5f8195']],
        d: 'M536 210.500 L631 225 C600 252 583 335 570.500 424 L477 409 C490 320 508 235 536 210.500 Z',
    },
    {
        id: 'bottomMid', v: [465, 504, 442, 648],
        stops: [[0, '#5f8094'], [0.3, '#597586'], [0.65, '#4d636f'], [1, '#4a5f6b']],
        d: 'M465 504 L558 519 C554 552 552 585 553 620 C554 645 558 660 566 668 L471.500 653 C465 645 461 630 460 605 C459 580 460 545 465 504 Z',
    },
    {
        id: 'midLeft', v: [339, 366, 480, 384],
        stops: [[0, '#4a5f6b'], [0.35, '#4e6572'], [1, '#5f8094']],
        d: 'M339 366 C360 384 410 398 477 409 L465 504 C398 493 348 478 327 460 Z',
    },
    {
        id: 'midRight', v: [570, 424, 778, 450],
        stops: [[0, '#5f8094'], [0.35, '#698fa8'], [0.75, '#749ec0'], [1, '#6f99b6']],
        d: 'M570.500 424 C620 431 670 437 710 436 C745 435.500 768 433 781 427 L769 521 C757 528 735 531 700 531 C660 531 610 526 558 519 Z',
    },
    {
        id: 'backTop', v: [632, 225, 772, 433],
        stops: [[0, '#79a9ca'], [0.35, '#83b5da'], [0.65, '#80b1d6'], [1, '#6f98b3']],
        d: 'M631 225 L657 208.500 L684 209.500 C770 223 846 285 846.500 362 C846.500 370 846 377 845 384 L781 427 C781.500 418 782 409 782 400 C782 315 715 238 631 225 Z',
    },
    {
        id: 'backLeft', v: [537, 210, 512, 173],
        stops: [[0, '#77a6c6'], [0.5, '#6b93ad'], [1, '#587384']],
        d: 'M430 229 L471 202 C488 191 502 185.500 520 185.500 C530 185.500 540 187 548 188 L563 193 L536 210.500 C495 204 462 211 430 229 Z',
    },
    {
        id: 'backBottom', v: [769, 521, 802, 570],
        stops: [[0, '#6d96b0'], [0.4, '#64879d'], [1, '#465a66']],
        d: 'M769 521 L833 480 C826 528 796 570 750 603 L706 634 C742 602 762 567 769 521 Z',
    },
];

const edges = [
    'M430 229 C462 211 495 204 536 210.500 L631 225 C715 238 782 315 782 400 C782 409 781.500 418 781 427 L769 521 C762 567 742 602 706 634',
    'M563 193 L536 210.500 C508 235 490 320 477 409 L465 504 C460 545 459 580 460 605 C461 630 465 645 471.500 653',
    'M657 208.500 L631 225 C600 252 583 335 570.500 424 L558 519 C554 552 552 585 553 620 C554 645 558 660 566 668',
    'M339 366 C360 384 410 398 477 409 L570.500 424 C620 431 670 437 710 436 C745 435.500 768 433 781 427 L845 384.500',
    'M327 460 C348 478 398 493 465 504 L558 519 C610 526 660 531 700 531 C735 531 757 528 769 521 L833 480',
    'M546 188 L563 193 L657 208.500 L685 209.500',
];

function Model() {
    return (
        <ModelSvg viewBox="164 51 1116 649" preserveAspectRatio="xMinYMin meet" role="img" aria-label="Model">
            <defs>
                {spheres.map((s) => (
                    <radialGradient key={s.id} id={s.id} gradientUnits="userSpaceOnUse" cx={s.cx} cy={s.cy} r={s.r}>
                        {sphereStops.map(([o, c]) => <stop key={o} offset={o} stopColor={c} />)}
                    </radialGradient>
                ))}
                {strips.map((s) => (
                    <linearGradient key={s.id} id={s.id} gradientUnits="userSpaceOnUse" x1={s.v[0]} y1={s.v[1]} x2={s.v[2]} y2={s.v[3]}>
                        {s.stops.map(([o, c]) => <stop key={o} offset={o} stopColor={c} />)}
                    </linearGradient>
                ))}
                <radialGradient id="shine">
                    <stop offset="0" stopColor="#fff" />
                    <stop offset=".34" stopColor="#fff" />
                    <stop offset=".5" stopColor="#e6f8ff" stopOpacity=".8" />
                    <stop offset=".68" stopColor="#b4e2fb" stopOpacity=".38" />
                    <stop offset="1" stopColor="#90c6ec" stopOpacity="0" />
                </radialGradient>
            </defs>
            <path d={outline} fill="#6d96b0" />
            <path d="M563 193 L657 208.500 L631 225 L536 210.500 Z" fill="#78a7c7" />
            <path d="M477 409 L570.500 424 L558 519 L465 504 Z" fill="#5f8094" />
            {spheres.map((s) => <path key={s.id} d={s.d} fill={`url(#${s.id})`} />)}
            {strips.map((s) => <path key={s.id} d={s.d} fill={`url(#${s.id})`} />)}
            <circle cx="683" cy="350" r="58" fill="url(#shine)" />
            <g fill="none" stroke="#16222a" strokeWidth=".85">
                {edges.map((d) => <path key={d} d={d} />)}
            </g>
            <path d={outline} fill="none" stroke="#d9ac55" strokeWidth="1.100" />
            <path d="M477 409 L570.500 424 M477 409 C500 418 540 422 570.500 424 M477 409 C510 416 530 418 570.500 424" fill="none" stroke="#ee1118" strokeWidth="1.400" />
            <g>
                <path d="M302 426 V436 L304.500 434 L306.500 438 L308 437 L306.500 433.500 H309.500 Z" fill="#111" stroke="#fff" strokeWidth=".5" />
                <text x="309" y="440" fontSize="8" fontWeight="700" fill="#222">1</text>
            </g>
        </ModelSvg>
    );
}

const ViewCube = styled.svg`
    position: absolute;
    top: 9px;
    right: 5px;
`;

function Cube() {
    return (
        <ViewCube width="110" height="106" viewBox="1165 60 110 106" role="img" aria-label="View cube">
            <g fill="#d6dfe6">
                <path d="M1220 60.500 L1224.500 67 H1215.500 Z M1220 160 L1225 153.500 H1215 Z M1170 110.500 L1177 105.500 V116 Z M1270 110.500 L1263 105.500 V116 Z" />
                <path d="M1184 83 V76 L1186 77.500 Q1195 69 1206 66.500 L1207 70 Q1197 72.500 1189 80 L1191 82 Z" />
                <path d="M1256 83 V76 L1254 77.500 Q1245 69 1234 66.500 L1233 70 Q1243 72.500 1251 80 L1249 82 Z" />
                <path d="M1199 91 Q1201 87 1206 87 L1238 89 Q1244 91 1244 97 L1240 129 Q1238 135 1232 134.500 L1200 131 Q1195 130 1195.500 124 Z" stroke="#c3d0d9" strokeWidth=".6" />
            </g>
            <g fill="#fff">
                <path d="M1206 97 L1226 98.500 Q1230 99 1230 103 L1228 125 Q1227 129 1223 128.500 L1204 126 Q1201 125 1201.500 121 L1203 100 Q1203.500 97 1206 97 Z" />
                <path d="M1209 88.500 L1234 90.500 L1231 95.500 L1207 93.500 Z M1237 103 L1242 97 L1240 123 L1235.500 128 Z" />
                <circle cx="1233.500" cy="99" r="3.500" /><circle cx="1202" cy="93" r="3" /><circle cx="1198" cy="126" r="2.500" /><circle cx="1232" cy="130" r="3" />
            </g>
            <path d="M1215 90.500 L1230 92" stroke="#444" strokeWidth="1.200" strokeDasharray="2 .6" />
            <path d="M1240 105 L1238 122" stroke="#444" strokeWidth="1.200" strokeDasharray="2 .6" />
            <path d="M1202 125 L1207 85" stroke="#5cc25c" strokeWidth="1" />
            <path d="M1202 125 L1241 130.500" stroke="#d84a4a" strokeWidth=".8" />
            <path d="M1202 125 L1196 129" stroke="#2b2bd0" strokeWidth="1.200" />
            <g fontSize="9" fontWeight="700" textAnchor="middle">
                <text x="1216" y="116" fill="#222">Top</text>
                <text x="1207" y="83" fill="#2c9c3a" fontSize="8">Y</text>
                <text x="1246" y="134" fill="#d02a2a" fontSize="8">X</text>
                <text x="1193" y="134" fill="#2222c8" fontSize="8">Z</text>
            </g>
        </ViewCube>
    );
}

/* ---------- overlays ---------- */

const PanelToggle = styled.button`
    display: flex;
    align-items: center;
    justify-content: center;
    position: absolute;
    top: 307px;
    left: 0;
    width: 21px;
    height: 23px;
    border: 1px solid #bbb;
    border-left: 0;
    background: #fdfdfd;
`;

const Dialog = styled.form`
    position: absolute;
    top: 23px;
    left: 65px;
    width: 146px;
    background: #fff;
    box-shadow: 0 1px 5px rgba(0, 0, 0, 0.3);
`;

const DialogHead = styled.div`
    display: flex;
    align-items: center;
    height: 20px;
    border-bottom: 1px solid #ddd;
    h2 {
        flex: 1;
        margin: 0 0 0 3px;
        color: #a3202a;
        font-size: 9px;
        line-height: 12px;
    }
`;

const AcceptButton = styled.button`
    display: flex;
    align-items: center;
    justify-content: center;
    width: 19px;
    height: 19px;
    background: #0b850b;
`;

const Tabs = styled.div`
    display: flex;
    height: 17px;
    border-bottom: 1px solid #ccc;
`;

const TabButton = styled.button`
    flex: ${(p) => p.$grow} 0 0;
    height: 17px;
    font-weight: 500;
    border-bottom: 2px solid ${(p) => (p.$active ? '#1f5bb5' : 'transparent')};
    color: ${(p) => (p.$active ? '#1f4fa8' : '#333')};
`;

const Entities = styled.div`
    margin: 4px 2px 0;
    padding: 3px 3px 1px;
    border: 1px solid #3f7ab5;
    border-radius: 1px;
    background: #d8edf9;
    small {
        display: block;
        font-size: 7px;
        line-height: 11px;
    }
    div {
        display: flex;
        align-items: center;
        justify-content: space-between;
        height: 13px;
        padding-right: 4px;
    }
`;

const CheckLabel = styled.label`
    display: flex;
    align-items: center;
    gap: 3px;
    height: 24px;
    padding-left: 2px;
    input {
        appearance: none;
        width: 8px;
        height: 8px;
        margin: 0;
        border: 1px solid #777;
        border-radius: 2px;
        background: #fff;
    }
`;

const SliderRow = styled.div`
    display: flex;
    align-items: center;
    justify-content: space-between;
    height: 14px;
    padding: 0 3px 1px 4px;
    opacity: 0.9;
`;

const Slider = styled.input`
    appearance: none;
    width: 76px;
    height: 10px;
    margin: 0;
    background: linear-gradient(#555, #555) center / 100% 1px no-repeat;
    &::-webkit-slider-thumb {
        appearance: none;
        width: 8px;
        height: 8px;
        border: 1px solid #555;
        border-radius: 50%;
        background: #fff;
    }
`;

const SideTabs = styled.div`
    display: flex;
    flex-direction: column;
    position: absolute;
    top: 274px;
    right: 0;
    width: 21px;
    border: solid #bbb;
    border-width: 1px 0 0 1px;
    background: #fff;
    button {
        display: flex;
        align-items: center;
        justify-content: center;
        height: 22px;
        border-bottom: 1px solid #bbb;
    }
`;

const ShadeMenu = styled.button`
    display: flex;
    align-items: center;
    gap: 4px;
    position: absolute;
    top: 97px;
    right: 12px;
`;

const MeasureButton = styled.button`
    position: absolute;
    right: 6px;
    bottom: 3px;
`;

function EncloseDialog() {
    return (
        <Dialog onSubmit={(e) => e.preventDefault()}>
            <DialogHead>
                <h2>Enclose 1</h2>
                <AcceptButton type="submit" aria-label="Accept"><Icon name="check" size={13} /></AcceptButton>
                <IconButton type="button" $w={19} aria-label="Cancel"><Icon name="cross" size={11} /></IconButton>
            </DialogHead>
            <Tabs>
                <TabButton type="button" $grow={30} $active>New</TabButton>
                <TabButton type="button" $grow={29}>Add</TabButton>
                <TabButton type="button" $grow={42}>Remove</TabButton>
                <TabButton type="button" $grow={46}>Intersect</TabButton>
            </Tabs>
            <Entities>
                <small>Entities</small>
                <div>
                    Surface 1
                    <button type="button" aria-label="Remove Surface 1"><Icon name="remove" size={8} /></button>
                </div>
            </Entities>
            <CheckLabel>
                <input type="checkbox" />
                Keep tools
            </CheckLabel>
            <SliderRow>
                <Slider type="range" min="0" max="100" defaultValue="70" aria-label="Opacity" />
                <Icon name="help" size={9} />
            </SliderRow>
        </Dialog>
    );
}

/* ---------- bottom tabs ---------- */

const BottomBar = styled.footer`
    display: flex;
    flex: none;
    gap: 2px;
    height: 20px;
    background: #cdcdcd;
`;

const AddTab = styled.button`
    display: flex;
    align-items: center;
    justify-content: center;
    width: 24px;
    padding-right: 3px;
`;

const DocTab = styled.button`
    display: flex;
    align-items: center;
    gap: 2px;
    width: 133px;
    padding: 0 6px;
    border-radius: 0 0 3px 3px;
    border-bottom: 2px solid ${(p) => (p.$active ? '#2c52a8' : 'transparent')};
    background: ${(p) => (p.$active ? '#fdfdfd' : '#e3e3e3')};
    color: ${(p) => (p.$active ? '#333' : '#666')};
`;

function App() {
    return (
        <Page>
            <GlobalStyle />
            <Header>
                <Brand href="#home"><Icon name="logo" size={16} />onshape</Brand>
                <IconButton $w={28} aria-label="Menu"><Icon name="menu" size={12} /></IconButton>
                <Title>Enclose Gaps</Title>
                <Branch>Main</Branch>
                <IconButton $w={22} aria-label="Link"><Icon name="link" size={10} /></IconButton>
                <Crumb href="#projects"><Icon name="folder" size={13} />PROJECTS</Crumb>
                <HeaderRight>
                    <IconButton aria-label="Checks"><Icon name="braces" size={14} /></IconButton>
                    <IconButton aria-label="Notifications"><Icon name="bell" size={14} /><Badge>1</Badge></IconButton>
                    <IconButton $w={20} aria-label="Tasks"><Icon name="list" size={13} /></IconButton>
                    <IconButton aria-label="Apps"><Icon name="apps" size={13} /></IconButton>
                    <IconButton aria-label="Learning"><Icon name="head" size={13} /></IconButton>
                    <ShareButton>Share</ShareButton>
                    <IconButton aria-label="Help"><Icon name="help" size={14} /></IconButton>
                    <IconButton $w={10} aria-label="Help menu"><Icon name="caret" size={8} /></IconButton>
                    <UserButton><Avatar />Roy Mutalik<Icon name="caret" size={8} /></UserButton>
                    <StatusDot />
                </HeaderRight>
            </Header>
            <Body>
                <Rail>
                    <RailButton aria-label="Feature list"><Icon name="featureTree" /></RailButton>
                    <RailButton aria-label="Insert"><Icon name="insert" /></RailButton>
                    <RailButton aria-label="Edit"><Icon name="sketchEdit" /></RailButton>
                    <RailButton aria-label="Comments"><Icon name="comment" /></RailButton>
                    <RailButton aria-label="Part help"><Icon name="cubeHelp" /></RailButton>
                    <RailButton aria-label="History"><Icon name="stopwatch" /></RailButton>
                    <RailLine />
                    <RailButton aria-label="Tables"><Icon name="table" size={13} /></RailButton>
                    <RailButton $bottom aria-label="Find"><Icon name="searchModel" /></RailButton>
                </Rail>
                <Main>
                    <Toolbar>
                        <ToolGroup $first $w={46}>
                            <ToolButton aria-label="Undo"><Icon name="undo" size={11} /></ToolButton>
                            <ToolButton aria-label="Redo"><Icon name="redo" size={11} /></ToolButton>
                        </ToolGroup>
                        <ToolGroup $w={59}>
                            <ToolButton $w={52}><Icon name="pencil" size={13} />Sketch</ToolButton>
                        </ToolGroup>
                        {toolGroups.map((g) => (
                            <ToolGroup key={g.tools[0]} $w={g.w}>
                                {g.tools.map((t, i) => <Tool key={i} name={t} />)}
                            </ToolGroup>
                        ))}
                        <SearchTools>
                            Search tools...
                            <Keys>
                                <Key>alt/⌥</Key>
                                <Key>c</Key>
                            </Keys>
                        </SearchTools>
                    </Toolbar>
                    <Workspace>
                        <FeaturePanel />
                        <Viewport>
                            <Model />
                            <PanelToggle aria-label="Toggle list"><Icon name="treeToggle" /></PanelToggle>
                            <EncloseDialog />
                            <Cube />
                            <ShadeMenu aria-label="Display style">
                                <Icon name="shaded" size={13} />
                                <Icon name="caret" size={8} />
                            </ShadeMenu>
                            <SideTabs>
                                <button aria-label="Appearance"><Icon name="material" size={15} /></button>
                                <button aria-label="Table"><Icon name="tableCube" size={15} /></button>
                                <button aria-label="Configurations"><Icon name="tableConfig" size={15} /></button>
                                <button aria-label="Variables"><Icon name="tableVar" size={15} /></button>
                            </SideTabs>
                            <MeasureButton aria-label="Measure"><Icon name="protractor" size={14} /></MeasureButton>
                        </Viewport>
                    </Workspace>
                    <BottomBar>
                        <AddTab aria-label="Add tab"><Icon name="plus" size={11} /></AddTab>
                        <DocTab $active><Icon name="partStudio" size={13} />Part Studio 1</DocTab>
                        <DocTab><Icon name="assembly" size={13} />Assembly 1</DocTab>
                    </BottomBar>
                </Main>
            </Body>
        </Page>
    );
}

export default App;
